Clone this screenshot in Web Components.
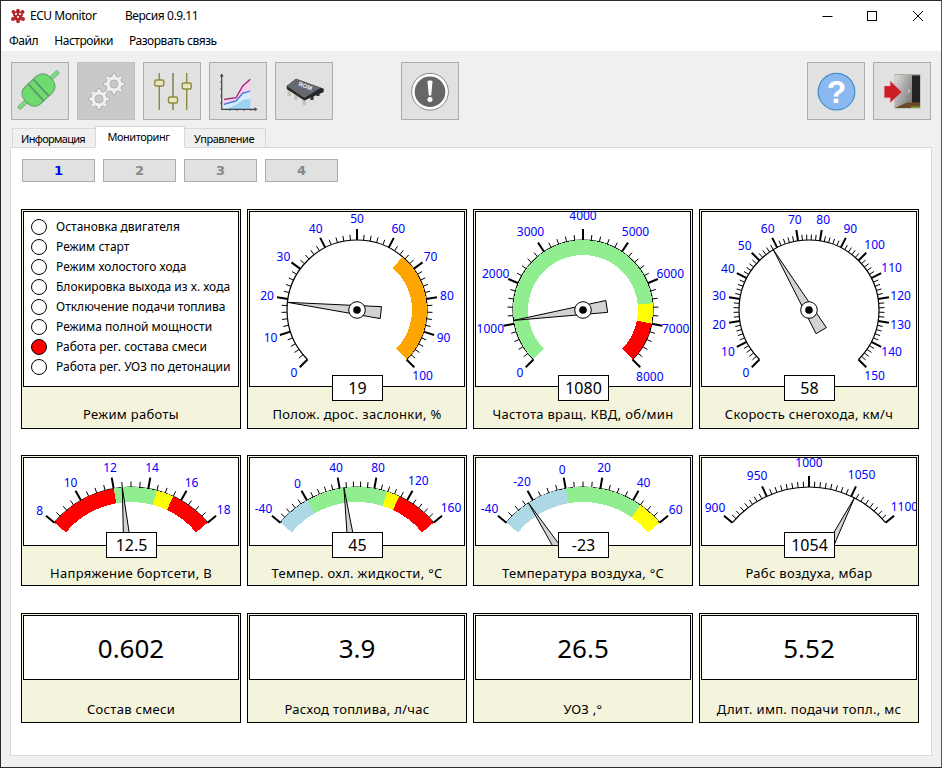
<!DOCTYPE html>
<html lang="ru"><head><meta charset="utf-8"><title>ECU Monitor</title>
<style>
html,body{margin:0;padding:0;background:#f0f0f0;overflow:hidden}
body{font-family:"Noto Sans","Liberation Sans",sans-serif}
</style></head><body>
<ecu-window>
  <ecu-titlebar></ecu-titlebar>
  <ecu-menubar><span>Файл</span><span>Настройки</span><span>Разорвать связь</span></ecu-menubar>
  <ecu-toolbar>
    <ecu-tool icon="plug"></ecu-tool>
    <ecu-tool icon="gears" disabled></ecu-tool>
    <ecu-tool icon="sliders"></ecu-tool>
    <ecu-tool icon="chart"></ecu-tool>
    <ecu-tool icon="rom"></ecu-tool>
    <ecu-tool icon="alert" style="margin-left:60px"></ecu-tool>
    <ecu-tool icon="help" style="margin-left:auto"></ecu-tool>
    <ecu-tool icon="exit"></ecu-tool>
  </ecu-toolbar>
  <ecu-tabs><span>Информация</span><span class="on" data-on>Мониторинг</span><span>Управление</span></ecu-tabs>
  <ecu-pane>
    <ecu-pages><ecu-page on>1</ecu-page><ecu-page>2</ecu-page><ecu-page>3</ecu-page><ecu-page>4</ecu-page></ecu-pages>
    <ecu-grid size="big">
      <ecu-card size="big" label="Режим работы">
        <ecu-legend>
          <ecu-lamp>Остановка двигателя</ecu-lamp>
          <ecu-lamp>Режим старт</ecu-lamp>
          <ecu-lamp>Режим холостого хода</ecu-lamp>
          <ecu-lamp>Блокировка выхода из х. хода</ecu-lamp>
          <ecu-lamp>Отключение подачи топлива</ecu-lamp>
          <ecu-lamp>Режима полной мощности</ecu-lamp>
          <ecu-lamp on>Работа рег. состава смеси</ecu-lamp>
          <ecu-lamp>Работа рег. УОЗ по детонации</ecu-lamp>
        </ecu-legend>
      </ecu-card>
      <ecu-card size="big" label="Полож. дрос. заслонки, %" value="19"><ecu-dial min="0" max="100" step="10" minors="4" half="135" r="70" cy="98" val="19" bands="65,100,#ffa500"></ecu-dial></ecu-card>
      <ecu-card size="big" label="Частота вращ. КВД, об/мин" value="1080"><ecu-dial min="0" max="8000" step="1000" minors="4" half="135" r="70" cy="98" val="1080" bands="0,6500,#90ee90;6500,7000,#ffff00;7000,8000,#ff0000"></ecu-dial></ecu-card>
      <ecu-card size="big" label="Скорость снегохода, км/ч" value="58"><ecu-dial min="0" max="150" step="10" minors="4" half="135" r="70" cy="98" val="58" bands=""></ecu-dial></ecu-card>
    </ecu-grid>
    <ecu-grid size="mid" style="margin-top:26px">
      <ecu-card size="mid" label="Напряжение бортсети, В" value="12.5"><ecu-dial min="8" max="18" step="2" minors="3" half="50" r="100" cy="129" val="12.5" bands="8,12,#ff0000;12,14.5,#90ee90;14.5,15.5,#ffff00;15.5,18,#ff0000"></ecu-dial></ecu-card>
      <ecu-card size="mid" label="Темпер. охл. жидкости, °C" value="45"><ecu-dial min="-40" max="160" step="40" minors="4" half="50" r="100" cy="129" val="45" bands="-40,0,#add8e6;0,95,#90ee90;95,110,#ffff00;110,160,#ff0000"></ecu-dial></ecu-card>
      <ecu-card size="mid" label="Температура воздуха, °C" value="-23"><ecu-dial min="-40" max="60" step="20" minors="3" half="50" r="100" cy="129" val="-23" bands="-40,0,#add8e6;0,45,#90ee90;45,60,#ffff00"></ecu-dial></ecu-card>
      <ecu-card size="mid" label="Рабс воздуха, мбар" value="1054"><ecu-dial min="900" max="1100" step="50" minors="7" half="50" r="100" cy="129" val="1054" bands=""></ecu-dial></ecu-card>
    </ecu-grid>
    <ecu-grid size="small" style="margin-top:27px">
      <ecu-card size="small" label="Состав смеси"><ecu-big>0.602</ecu-big></ecu-card>
      <ecu-card size="small" label="Расход топлива, л/час"><ecu-big>3.9</ecu-big></ecu-card>
      <ecu-card size="small" label="УОЗ ,°"><ecu-big>26.5</ecu-big></ecu-card>
      <ecu-card size="small" label="Длит. имп. подачи топл., мс"><ecu-big>5.52</ecu-big></ecu-card>
    </ecu-grid>
  </ecu-pane>
</ecu-window>
<script>
const base = (css, html) => class extends HTMLElement {
  constructor(){ super(); this.attachShadow({mode:'open'}).innerHTML = `<style>${css}</style>${html}`; }
};
const UI = '"Noto Sans","Liberation Sans",sans-serif';

customElements.define('ecu-window', base(
  `:host{display:flex;flex-direction:column;width:942px;height:768px;box-sizing:border-box;border:1px solid #2b2b2b;border-right-color:#555;background:#f0f0f0;font-family:${UI};color:#000;overflow:hidden}`,
  `<slot></slot>`));

customElements.define('ecu-titlebar', base(
  `:host{display:flex;align-items:center;height:29px;flex:none;background:#fff;font-size:12px;letter-spacing:-.45px;padding-left:9px;position:relative}
   .t{margin-left:4px;width:95px}
   .b{position:absolute;top:0;height:29px;display:flex;align-items:center;justify-content:center}
   svg{display:block}`,
  `<svg width="16" height="16" viewBox="0 0 16 16"><g fill="#b3272f"><circle cx="8" cy="8" r="5"/><circle cx="3.5" cy="4" r="2"/><circle cx="12.5" cy="4" r="2"/><circle cx="3" cy="11" r="2"/><circle cx="13" cy="11" r="2"/><circle cx="8" cy="2.5" r="1.8"/><circle cx="8" cy="13.5" r="1.8"/></g><g fill="#f3d6d6"><rect x="5" y="5" width="2" height="2"/><rect x="9" y="5" width="2" height="2"/><rect x="7" y="8" width="2" height="2"/><rect x="3" y="8" width="1" height="1"/><rect x="12" y="8" width="1" height="1"/></g></svg>
   <span class="t">ECU Monitor</span><span>Версия 0.9.11</span>
   <span class="b" style="left:820px;width:12px"><svg width="12" height="12"><path d="M1.5 6.5h10" stroke="#000" fill="none"/></svg></span>
   <span class="b" style="left:865px;width:12px"><svg width="12" height="12"><rect x="1.5" y="1.5" width="9" height="9" stroke="#000" fill="none"/></svg></span>
   <span class="b" style="left:911px;width:12px"><svg width="12" height="12"><path d="M1 1l10 10M11 1L1 11" stroke="#000" fill="none"/></svg></span>`));

customElements.define('ecu-menubar', base(
  `:host{display:flex;align-items:center;gap:16px;height:21px;box-sizing:border-box;flex:none;background:#fff;font-size:12px;letter-spacing:-.45px;padding-left:8px;padding-bottom:1px}`,
  `<slot></slot>`));

customElements.define('ecu-toolbar', base(
  `:host{display:flex;gap:8px;height:76px;box-sizing:border-box;padding:11px 10px 0 10px;flex:none;background:#f0f0f0}`,
  `<slot></slot>`));

function gearPoly(cx,cy,r1,r2,n){
  const p=[];const s=Math.PI*2/n;
  for(let i=0;i<n;i++){
    const a=i*s;
    [[-.32,r1],[-.18,r2],[.18,r2],[.32,r1]].forEach(([d,r])=>{
      p.push((cx+r*Math.cos(a+d*s)).toFixed(1)+','+(cy+r*Math.sin(a+d*s)).toFixed(1));
    });
  }
  return p.join(' ');
}
const ICONS = {
  plug:`<g transform="rotate(-43 26.5 27)">
      <rect x="-0.500" y="25" width="54" height="4" rx="1.500" fill="#7bdc7b" stroke="#6aa878" stroke-width=".8"/>
      <rect x="9.500" y="15.500" width="34" height="23" rx="9" fill="#6ddb6d" stroke="#5f9e6c" stroke-width="1"/>
      <path d="M23 15.500v23M30 15.500v23" stroke="#5a9a68" stroke-width="1.800"/>
    </g>`,
  gears:`<g fill="#efefef" stroke="#b0b0b0" stroke-width="1">
      <polygon points="${gearPoly(36,21,8,10.500,8)}"/><circle cx="36" cy="21" r="4" fill="#c9c9c9"/>
      <polygon points="${gearPoly(21,36,8,10.500,8)}"/><circle cx="21" cy="36" r="4" fill="#c9c9c9"/>
    </g>`,
  sliders:`<g stroke="#8c8a3c" stroke-width="1.400" fill="#e9e5c2">
      <path d="M15.300 10v37M42.700 10v37" fill="none"/><path d="M29 10v37" fill="none" stroke="#77774f"/>
      <rect x="10.800" y="17" width="9" height="6" rx="1.500"/><rect x="24.500" y="34" width="9" height="6" rx="1.500"/><rect x="38.200" y="20" width="9" height="6" rx="1.500"/>
    </g>`,
  chart:`<path d="M14 46V36.300L26 34.700L32.700 23L40.300 16.300V46z" fill="#f6cdec"/>
    <path d="M14 46V41.300L26 38L32.700 30.300L40.300 28V46z" fill="#d5ecfa"/>
    <path d="M16 46L26 42L33 37L40.300 36V46z" fill="#9bd3f2"/>
    <path d="M14 36.300L26 34.700L32.700 23L40.300 16.300" fill="none" stroke="#a3206f" stroke-width="1.300"/>
    <path d="M14 41.300L26 38L32.700 30.300L40.300 28" fill="none" stroke="#3a72d8" stroke-width="1.300"/>
    <path d="M11.700 12.500V46.300H46" fill="none" stroke="#444" stroke-width="1.200"/>
    <path d="M11.700 10.500l-2 3h4zM47.500 46.300l-3-2v4z" fill="#444"/>
    <path d="M10 19h2M10 26h2M10 33h2M10 40h2M20 46v2M27 46v2M34 46v2M41 46v2" stroke="#444" stroke-width=".8"/>`,
  rom:`<path d="M13.300 25v8M20 29v8M28.300 33.500v8.500" stroke="#c4c4b4" stroke-width="3.400"/>
    <path d="M36 33v4M42 30v3" stroke="#333" stroke-width="3"/>
    <path d="M10.700 23L20 15.700L47.700 25.700V29L28.300 37.500L10.700 26z" fill="#26272a"/>
    <path d="M10.700 23L20 15.700L45 24.800L28.300 35z" fill="#66686e"/>
    <text x="0" y="0" transform="translate(22,22.500) rotate(21)" font-family="Liberation Sans,sans-serif" font-size="6" font-weight="700" fill="#f2f2f2">ROM</text>`,
  alert:`<circle cx="28" cy="28.700" r="18.400" fill="#fff" stroke="#8a8a8a" stroke-width="1"/><circle cx="28" cy="28.700" r="15.300" fill="#666"/>
    <path d="M25.500 18.500c0-1.500 5-1.500 5 0l-1.300 14h-2.400z" fill="#fff"/><circle cx="28" cy="36.500" r="2.500" fill="#fff"/>`,
  help:`<circle cx="28.500" cy="28.700" r="18.300" fill="#8ab8f0" stroke="#4a8dcc" stroke-width="1.200"/>
    <text x="28.500" y="40" text-anchor="middle" font-family="Liberation Sans,sans-serif" font-size="32" font-weight="700" fill="#fff">?</text>`,
  exit:`<defs><linearGradient id="d" x1="0" x2="1" y1="0" y2=".5"><stop offset="0" stop-color="#dcdcdc"/><stop offset="1" stop-color="#6a6a6a"/></linearGradient></defs>
    <rect x="20.500" y="11" width="26" height="34.500" fill="#aab09a"/>
    <path d="M21 12H46V39L21 45z" fill="url(#d)"/><path d="M38 12.500H46V40H38z" fill="#222"/>
    <path d="M21 45L33 39.500H46V45z" fill="#6b4a26"/><rect x="37" y="43.500" width="9" height="1.500" fill="#8c9a3a"/>
    <path d="M34 26l1.500 2-1.500 2" stroke="#e8e8e8" stroke-width=".8" fill="none"/>
    <path d="M10.300 23H16.300V18L27.700 29L16.300 39.700V34.700H10.300z" fill="#cc1e24" stroke="#d89a9a" stroke-width=".4"/>`
};
class EcuTool extends HTMLElement{
  constructor(){super();this.attachShadow({mode:'open'});}
  connectedCallback(){
    this.shadowRoot.innerHTML=`<style>
      :host{display:block;width:58px;height:58px;box-sizing:border-box;border:1px solid #adadad;background:#e1e1e1;flex:none}
      :host([disabled]){background:#c9c9c9;border-color:#bfbfbf}
      svg{display:block}
    </style><svg width="56" height="56" viewBox="0 0 56 56">${ICONS[this.getAttribute('icon')]}</svg>`;
  }
}
customElements.define('ecu-tool',EcuTool);

class EcuTabs extends HTMLElement{
  constructor(){super();this.attachShadow({mode:'open'}).innerHTML=`<style>
     :host{display:flex;align-items:flex-end;height:21px;flex:none;padding-left:11px;margin-bottom:-1px;position:relative;z-index:1;font-size:11px;letter-spacing:-.45px}
     ::slotted(span){display:flex;align-items:center;justify-content:center;box-sizing:border-box;height:20px;border:1px solid #d9d9d9;border-bottom:1px solid #d9d9d9;background:#f0f0f0;margin-right:-1px}
     ::slotted(span:nth-child(1)){width:84px;letter-spacing:-.7px;padding-right:2px}
     ::slotted(span:nth-child(2)){width:90px;height:22px;background:#fff;border-bottom-color:#fff;position:relative;z-index:1;padding:0 3px 2px 0}
     ::slotted(span:nth-child(3)){width:82px;padding-right:2px}
   </style><slot></slot>`;}
}
customElements.define('ecu-tabs',EcuTabs);

customElements.define('ecu-pane', base(
  `:host{display:block;box-sizing:border-box;margin:0 9px 0 9px;width:922px;height:609px;flex:none;border:1px solid #d9d9d9;background:#fff;padding:11px 10px 0 10px}`,
  `<slot></slot>`));

customElements.define('ecu-pages', base(
  `:host{display:flex;gap:8px;padding-left:1px;margin-bottom:27px}`,`<slot></slot>`));

customElements.define('ecu-page', base(
  `:host{display:flex;align-items:center;justify-content:center;width:73px;height:23px;box-sizing:border-box;border:1px solid #adadad;background:#e1e1e1;color:#888;font:700 13px "DejaVu Sans",sans-serif}
   :host([on]){color:#0000ff}`,`<slot></slot>`));

customElements.define('ecu-grid', base(
  `:host{display:grid;grid-template-columns:repeat(4,220px);column-gap:6px}`,`<slot></slot>`));

class EcuCard extends HTMLElement{
  constructor(){super();this.attachShadow({mode:'open'});}
  connectedCallback(){
    const v=this.getAttribute('value');
    this.shadowRoot.innerHTML=`<style>
      :host{display:flex;flex-direction:column;box-sizing:border-box;width:220px;border:1px solid #000;background:#f4f4dc;position:relative;padding:1px;font-size:13px;color:#000}
      :host([size=big]){height:220px;--h:176px;--vt:165px;--lp:4px}
      :host([size=mid]){height:131px;--h:89px;--vt:76px;--lp:2px}
      :host([size=small]){height:110px;--h:65px;--vt:0;--lp:3px}
      .in{height:var(--h);flex:none;box-sizing:border-box;border:1px solid #000;background:#fff}
      .lab{flex:1;display:flex;align-items:flex-end;justify-content:center;padding-bottom:var(--lp);line-height:18px;white-space:nowrap;letter-spacing:.3px}
      .val{position:absolute;left:84px;top:var(--vt);width:51px;height:26px;box-sizing:border-box;border:1px solid #000;background:#fff;display:flex;align-items:center;justify-content:center;font-size:16px;padding-bottom:1px}
    </style><div class="in"><slot></slot></div>${v!==null?`<div class="val">${v}</div>`:''}<div class="lab">${this.getAttribute('label')}</div>`;
  }
}
customElements.define('ecu-card',EcuCard);

customElements.define('ecu-big', base(
  `:host{display:flex;align-items:center;justify-content:center;height:100%;font-size:26px;padding-top:1px;box-sizing:border-box}`,`<slot></slot>`));

customElements.define('ecu-legend', base(
  `:host{display:flex;flex-direction:column;padding:5px 0 0 7px}`,`<slot></slot>`));

customElements.define('ecu-lamp', base(
  `:host{display:flex;align-items:center;gap:9px;height:20px;font-size:12px;white-space:nowrap}
   i{display:block;width:16px;height:16px;box-sizing:border-box;border:1px solid #000;border-radius:50%;background:#fff;flex:none}
   span{position:relative;top:-1px}
   :host([on]) i{background:#ff0000}`,
  `<i></i><span><slot></slot></span>`));

class EcuDial extends HTMLElement{
  constructor(){super();this.attachShadow({mode:'open'});}
  connectedCallback(){
    const A=n=>parseFloat(this.getAttribute(n));
    const min=A('min'),max=A('max'),step=A('step'),minors=A('minors'),half=A('half'),R=A('r'),cy=A('cy'),val=A('val');
    const cx=107,W=214,H=cy>100?87:174;
    const ang=v=>(-half+(v-min)/(max-min)*2*half);
    const P=(r,a)=>{const t=a*Math.PI/180;return [cx+r*Math.sin(t),cy-r*Math.cos(t)];};
    const f=p=>p[0].toFixed(2)+' '+p[1].toFixed(2);
    let s='';
    const sub=step/(minors+1);
    const n=Math.round((max-min)/sub);
    for(let i=0;i<=n;i++){
      const a=ang(min+i*sub),maj=i%(minors+1)===0;
      s+=`<path d="M${f(P(R,a))}L${f(P(R+(maj?11:5.5),a))}" stroke="#000" stroke-width="${maj?2:1}"/>`;
    }
    s+=`<path d="M${f(P(R,-half))}A${R} ${R} 0 ${half>90?1:0} 1 ${f(P(R,half))}" fill="none" stroke="#000" stroke-width="1.200"/>`;
    (this.getAttribute('bands')||'').split(';').filter(Boolean).forEach(b=>{
      const [a0,a1,c]=b.split(',');const x=ang(+a0),y=ang(+a1),r2=R-15,lg=(y-x)>180?1:0;
      s+=`<path shape-rendering="crispEdges" d="M${f(P(R,x))}A${R} ${R} 0 ${lg} 1 ${f(P(R,y))}L${f(P(r2,y))}A${r2} ${r2} 0 ${lg} 0 ${f(P(r2,x))}Z" fill="${c}"/>`;
    });
    for(let v=min;v<=max+1e-6;v+=step){
      const t=String(v),a=ang(v),p=P(R+17.5+1.75*t.replace('-','').length+(t[0]==='-'?1:0),a);
      s+=`<text x="${p[0].toFixed(1)}" y="${(p[1]+4.3).toFixed(1)}" text-anchor="middle" fill="#0000ff" font-size="12">${t}</text>`;
    }
    const a=ang(val),tip=P(R,a),t=a*Math.PI/180,ux=Math.cos(t),uy=Math.sin(t);
    const back=R===70?24:0,hw=R===70?6:6.4,tb=P(-back,a);
    const b1=[tb[0]+hw*ux,tb[1]+hw*uy],b2=[tb[0]-hw*ux,tb[1]-hw*uy];
    s+=`<path d="M${f(tip)}L${f(b1)}L${f(b2)}Z" fill="#d3d3d3" stroke="#000" stroke-width="1"/>`;
    if(R===70) s+=`<circle cx="${cx}" cy="${cy}" r="8.300" fill="#fff" stroke="#000"/><circle cx="${cx}" cy="${cy}" r="3.800" fill="#000"/>`;
    this.shadowRoot.innerHTML=`<style>:host{display:block;width:${W}px;height:${H}px}svg{display:block;font-family:${UI};overflow:visible;clip-path:inset(-12px 0 0 0)}</style>
      <svg width="${W}" height="${H}" viewBox="0 0 ${W} ${H}">${s}</svg>`;
  }
}
customElements.define('ecu-dial',EcuDial);
</script>
</body></html>
